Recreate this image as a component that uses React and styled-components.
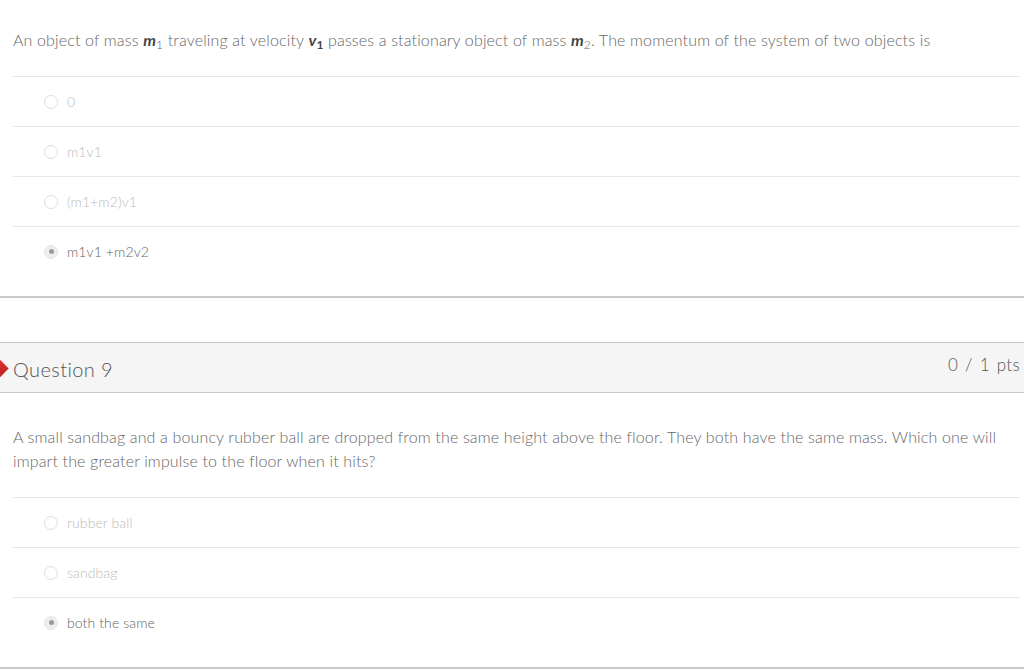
import React from "react";
import styled, { createGlobalStyle } from "styled-components";

const GlobalStyle = createGlobalStyle`
  html, body {
    margin: 0;
    padding: 0;
    background: #fff;
  }
  body {
    font-family: Lato, "Open Sans", "Liberation Sans", sans-serif;
    font-weight: 300;
    color: #555;
  }
`;

const Page = styled.div`
  width: 1024px;
  overflow: hidden;
`;

const QuestionBox = styled.div`
  margin-top: ${(p) => (p.$first ? "0" : "44px")};
  border-bottom: 2px solid #c9c9c9;
`;

const Header = styled.div`
  position: relative;
  display: flex;
  align-items: center;
  justify-content: space-between;
  height: 49px;
  padding: 0 4px 0 13px;
  background: #f5f5f5;
  border-top: 1px solid #c7c7c7;
  border-bottom: 1px solid #c7c7c7;
`;

const WrongMark = styled.div`
  position: absolute;
  left: -7px;
  top: 50%;
  width: 13px;
  height: 13px;
  margin-top: -6px;
  background: linear-gradient(135deg, #e0312f, #b81f24);
  transform: rotate(45deg);
`;

const Title = styled.h2`
  margin: 2px 0 0;
  font-size: 20px;
  font-weight: 300;
  color: #555;
  letter-spacing: 0.4px;
`;

const Points = styled.div`
  font-size: 17px;
  font-weight: 300;
  color: #555;
  margin-top: -7px;
  letter-spacing: 0.3px;
  word-spacing: 2px;
`;

const Body = styled.div`
  padding: ${(p) => (p.$first ? "28px" : "32px")} 4px 20px 13px;
`;

const Text = styled.div`
  font-size: 16px;
  line-height: 24px;
  letter-spacing: 0.15px;
  color: #666;
  padding-bottom: 24px;

  b {
    font-style: italic;
    font-weight: 700;
    color: #444;
  }
  sub {
    font-size: 12px;
    font-weight: 300;
    vertical-align: -3px;
    line-height: 0;
  }
  b sub {
    font-style: normal;
    font-weight: 700;
  }
`;

const Answers = styled.div`
  display: flex;
  flex-direction: column;
`;

const Row = styled.label`
  display: flex;
  align-items: center;
  gap: 9px;
  height: 49px;
  padding-left: 31px;
  border-top: 1px solid #e6e6e6;
  font-size: 14px;
  letter-spacing: 0.1px;
  color: ${(p) => (p.$selected ? "#5f5f5f" : "#bbbbbb")};
`;

const Radio = styled.span`
  position: relative;
  width: 12px;
  height: 12px;
  border-radius: 50%;
  border: 1px solid ${(p) => (p.$checked ? "#e6e6e6" : "#dedede")};
  background: ${(p) => (p.$checked ? "#eeeeee" : "#fff")};
  flex-shrink: 0;

  &::after {
    content: "";
    display: ${(p) => (p.$checked ? "block" : "none")};
    position: absolute;
    left: 50%;
    top: 50%;
    width: 5px;
    height: 5px;
    margin: -2.5px 0 0 -2.5px;
    border-radius: 50%;
    background: #9a9a9a;
  }
`;

const Answer = ({ label, selected }) => (
  <Row $selected={selected}>
    <Radio $checked={selected} />
    <span>{label}</span>
  </Row>
);

const questionOne = ["0", "m1v1", "(m1+m2)v1", "m1v1 +m2v2"];
const questionTwo = ["rubber ball", "sandbag", "both the same"];

export default function App() {
  return (
    <Page>
      <GlobalStyle />
      <QuestionBox $first>
        <Body $first>
          <Text>
            An object of mass <b>m</b>
            <sub>1</sub> traveling at velocity <b>v<sub>1</sub></b> passes a
            stationary object of mass <b>m</b>
            <sub>2</sub>. The momentum of the system of two objects is
          </Text>
          <Answers>
            {questionOne.map((a, i) => (
              <Answer key={a} label={a} selected={i === 3} />
            ))}
          </Answers>
        </Body>
      </QuestionBox>

      <QuestionBox>
        <Header>
          <WrongMark />
          <Title>Question 9</Title>
          <Points>0 / 1 pts</Points>
        </Header>
        <Body>
          <Text>
            A small sandbag and a bouncy rubber ball are dropped from the same
            height above the floor. They both have the same mass. Which one will
            impart the greater impulse to the floor when it hits?
          </Text>
          <Answers>
            {questionTwo.map((a, i) => (
              <Answer key={a} label={a} selected={i === 2} />
            ))}
          </Answers>
        </Body>
      </QuestionBox>
    </Page>
  );
}
